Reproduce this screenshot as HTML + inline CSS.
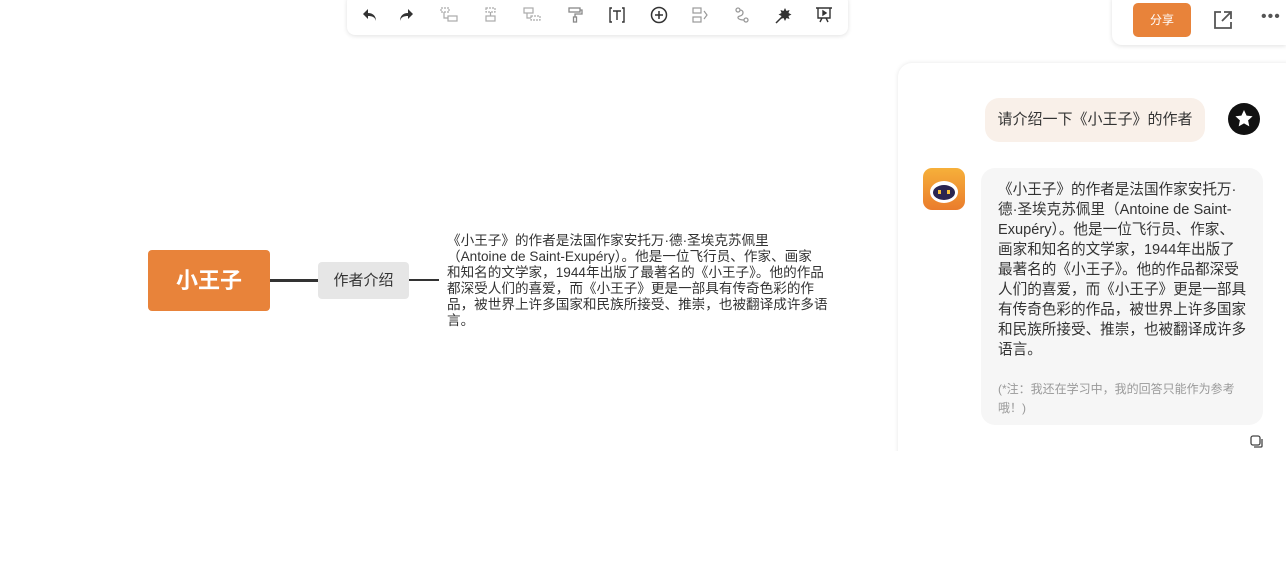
<!DOCTYPE html>
<html><head><meta charset="utf-8"><style>
body{margin:0;width:1286px;height:587px;background:#fff;position:relative;overflow:hidden;font-family:"Liberation Sans","Noto Sans CJK SC",sans-serif;}
.abs{position:absolute}
.tb{left:347px;top:-6px;width:501px;height:41px;background:#fff;border-radius:8px;box-shadow:0 1px 5px rgba(0,0,0,.12)}
.ic{position:absolute;top:11px;width:20px;height:20px}
.nw{white-space:nowrap}
</style></head><body>
<div class="abs tb">
<svg class="ic" style="left:13px" viewBox="0 0 20 20"><path d="M8 4L3 9l5 5V11c4 0 7 1 8 5 0-5-3-8-8-8z" fill="#333"/></svg>
<svg class="ic" style="left:49px" viewBox="0 0 20 20"><path d="M12 4l5 5-5 5V11c-4 0-7 1-8 5 0-5 3-8 8-8z" fill="#333"/></svg>
<svg class="ic" style="left:92px" viewBox="0 0 20 20" fill="none" stroke="#aaa" stroke-width="1.2"><rect x="2" y="3" width="8" height="4" stroke-dasharray="2 1"/><path d="M5 7v6h4"/><rect x="9" y="11" width="9" height="5"/></svg>
<svg class="ic" style="left:134px" viewBox="0 0 20 20" fill="none" stroke="#aaa" stroke-width="1.2"><rect x="5" y="3" width="9" height="4" stroke-dasharray="2 1"/><path d="M9.5 7v4"/><rect x="5" y="11" width="9" height="5"/></svg>
<svg class="ic" style="left:175px" viewBox="0 0 20 20" fill="none" stroke="#aaa" stroke-width="1.2"><rect x="2" y="3" width="9" height="5"/><path d="M5 8v5h4"/><rect x="9" y="11" width="9" height="4" stroke-dasharray="2 1"/></svg>
<svg class="ic" style="left:218px" viewBox="0 0 20 20" fill="none" stroke="#888" stroke-width="1.3"><rect x="4" y="3" width="11" height="4"/><path d="M15 5h2v4h-7v3"/><rect x="8.5" y="12" width="3" height="5"/></svg>
<svg class="ic" style="left:260px" viewBox="0 0 20 20" fill="none" stroke="#333" stroke-width="1.4"><path d="M5 3H3v14h2M15 3h2v14h-2M6 6h8M10 6v9"/></svg>
<svg class="ic" style="left:302px" viewBox="0 0 20 20" fill="none" stroke="#333" stroke-width="1.5"><circle cx="10" cy="10" r="7.5"/><path d="M10 6v8M6 10h8"/></svg>
<svg class="ic" style="left:343px" viewBox="0 0 20 20" fill="none" stroke="#999" stroke-width="1.2"><rect x="3" y="3" width="8" height="5"/><rect x="3" y="12" width="8" height="5"/><path d="M14 6l3 4-3 4"/></svg>
<svg class="ic" style="left:385px" viewBox="0 0 20 20" fill="none" stroke="#999" stroke-width="1.3"><circle cx="6" cy="5" r="2"/><circle cx="14" cy="15" r="2"/><path d="M8 5c4 0 4 5 0 6s-2 4 4 4"/></svg>
<svg class="ic" style="left:426px" viewBox="0 0 20 20"><path d="M3 18l7-7" stroke="#333" stroke-width="1.5"/><path d="M12 3l1.5 3 3-1-1 3 3 1.5-3 1.5 1 3-3-1-1.5 3-1.5-3-3 1 1-3-3-1.5 3-1.5-1-3 3 1z" fill="#333"/></svg>
<svg class="ic" style="left:467px" viewBox="0 0 20 20" fill="none" stroke="#333" stroke-width="1.4"><path d="M2 3h16M4 3v10h12V3M6 17l2-4M14 17l-2-4"/><path d="M9 6l3 2-3 2z" fill="#333"/></svg>
</div>
<div class="abs" style="left:1112px;top:-10px;width:174px;height:55px;background:#fff;border-radius:10px 0 0 10px;box-shadow:0 1px 5px rgba(0,0,0,.12)"></div>
<div class="abs" style="left:1133px;top:3px;width:58px;height:34px;background:#e8833a;border-radius:5px;color:#fff;font-size:12px;text-align:center;line-height:34px">分享</div>
<svg class="abs" style="left:1212px;top:9px" width="22" height="22" viewBox="0 0 22 22" fill="none" stroke="#555" stroke-width="1.8"><path d="M9 3H3v16h16v-6M12 3h7v7M19 3l-9 9"/></svg>
<div class="abs" style="left:1261px;top:8px;font-size:16px;color:#555;letter-spacing:1px">•••</div>

<div class="abs" style="left:888px;top:53px;width:398px;height:398px;overflow:hidden">
<div style="position:absolute;left:10px;top:10px;width:400px;height:420px;background:#fff;border-radius:14px;box-shadow:0 0 5px rgba(0,0,0,.1)"></div>
</div>
<div class="abs" style="left:985px;top:98px;width:220px;height:44px;background:#f9f0e9;border-radius:14px;font-size:15px;color:#333;line-height:44px;text-align:center">请介绍一下《小王子》的作者</div>
<div class="abs" style="left:1228px;top:103px;width:32px;height:32px;border-radius:50%;background:#111"><svg width="32" height="32" viewBox="0 0 32 32"><path d="M16 7l2.6 5.6 6 .7-4.5 4.1 1.2 6L16 20.4l-5.3 3 1.2-6-4.5-4.1 6-.7z" fill="#fff"/></svg></div>
<div class="abs" style="left:923px;top:168px;width:42px;height:42px;border-radius:9px;background:linear-gradient(#f6b03a,#ea7c2c)"><div style="position:absolute;left:7px;top:13px;width:28px;height:22px;border-radius:50%;background:#fff"></div><div style="position:absolute;left:10px;top:17px;width:22px;height:15px;border-radius:50%;background:#2a2550"></div><div style="position:absolute;left:15px;top:22px;width:3px;height:4px;background:#f6c03a"></div><div style="position:absolute;left:24px;top:22px;width:3px;height:4px;background:#f6c03a"></div></div>
<div class="abs" style="left:981px;top:168px;width:282px;height:257px;background:#f6f6f6;border-radius:14px"></div>
<div class="abs nw" style="left:998px;top:180px;font-size:14.6px;line-height:20px;color:#333">《小王子》的作者是法国作家安托万·<br>德·圣埃克苏佩里（Antoine de Saint-<br>Exupéry）。他是一位飞行员、作家、<br>画家和知名的文学家，1944年出版了<br>最著名的《小王子》。他的作品都深受<br>人们的喜爱，而《小王子》更是一部具<br>有传奇色彩的作品，被世界上许多国家<br>和民族所接受、推崇，也被翻译成许多<br>语言。</div>
<div class="abs nw" style="left:998px;top:380px;font-size:12px;line-height:19px;color:#999">(*注：我还在学习中，我的回答只能作为参考<br>哦！)</div>
<svg class="abs" style="left:1249px;top:434px" width="16" height="16" viewBox="0 0 16 16" fill="none" stroke="#444" stroke-width="1.3"><rect x="2" y="2" width="9" height="9" rx="2"/><path d="M13 5v7a1 1 0 0 1-1 1H5"/></svg>

<div class="abs" style="left:148px;top:250px;width:122px;height:61px;background:#e8833a;border-radius:4px;color:#fff;font-size:22px;font-weight:bold;text-align:center;line-height:61px">小王子</div>
<div class="abs" style="left:270px;top:279px;width:48px;height:3px;background:#333"></div>
<div class="abs" style="left:318px;top:262px;width:91px;height:37px;background:#e6e6e6;border-radius:4px;font-size:15px;color:#333;text-align:center;line-height:37px">作者介绍</div>
<div class="abs" style="left:409px;top:279px;width:30px;height:2px;background:#333"></div>
<div class="abs nw" style="left:447px;top:233px;font-size:13.6px;line-height:16px;color:#333">《小王子》的作者是法国作家安托万·德·圣埃克苏佩里<br>（Antoine de Saint-Exupéry）。他是一位飞行员、作家、画家<br>和知名的文学家，1944年出版了最著名的《小王子》。他的作品<br>都深受人们的喜爱，而《小王子》更是一部具有传奇色彩的作<br>品，被世界上许多国家和民族所接受、推崇，也被翻译成许多语<br>言。</div>
</body></html>
